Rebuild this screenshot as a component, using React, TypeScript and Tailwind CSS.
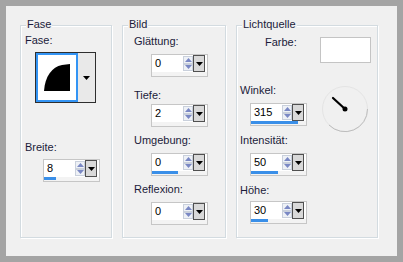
import React from "react";

const FONT = "font-['Liberation_Sans','Arial',sans-serif]";
const LABEL = "text-[11px] leading-[13px] text-[#1b1b3a] whitespace-nowrap";

function Tri({ up, color }: { up?: boolean; color: string }) {
  return (
    <svg width="7" height="4" viewBox="0 0 7 4">
      <path d={up ? "M0 4 L3.5 0 L7 4 Z" : "M0 0 L7 0 L3.5 4 Z"} fill={color} />
    </svg>
  );
}

function SpinBox({ value, bar = 0 }: { value: string; bar?: number }) {
  return (
    <div className="w-[57px] h-[23px] border border-[#c6c6c6] bg-white flex flex-col">
      <div className="flex h-[17px]">
        <span className="w-[31px] pl-[3px] text-[11px] leading-[17px] text-black">{value}</span>
        <div className="w-[10px] flex flex-col py-[1px]">
          <div className="flex-1 flex items-center justify-center border border-[#c9d0dc] bg-[#eef1f6]">
            <Tri up color="#7a88c4" />
          </div>
          <div className="flex-1 flex items-center justify-center border border-[#c9d0dc] bg-[#eef1f6]">
            <Tri color="#7a88c4" />
          </div>
        </div>
        <div className="w-[12px] h-[17px] border border-[#505050] bg-[#d9d9d9] flex items-center justify-center">
          <Tri color="#000" />
        </div>
      </div>
      <div className="h-[4px] bg-[#f3f3f3] flex items-start">
        <div className="h-[3px] bg-[#3a8fe8]" style={{ width: bar }} />
      </div>
    </div>
  );
}

function Group({
  title,
  width,
  children,
}: {
  title: string;
  width: number;
  children: React.ReactNode;
}) {
  return (
    <div
      className="relative h-[213px] border border-[#d3dbe0] shadow-[inset_1px_1px_0_#ffffff,1px_1px_0_#ffffff]"
      style={{ width }}
    >
      <span className={`absolute left-[5px] top-[-8px] px-[1px] bg-[#f0f0f0] ${LABEL}`}>
        {title}
      </span>
      {children}
    </div>
  );
}

function Field({
  label,
  labelX,
  spinX,
  top,
  gap = 6,
  value,
  bar,
}: {
  label: string;
  labelX: number;
  spinX: number;
  top: number;
  gap?: number;
  value: string;
  bar?: number;
}) {
  return (
    <div className="flex flex-col items-start" style={{ marginTop: top }}>
      <span className={LABEL} style={{ marginLeft: labelX }}>
        {label}
      </span>
      <div style={{ marginLeft: spinX, marginTop: gap }}>
        <SpinBox value={value} bar={bar} />
      </div>
    </div>
  );
}

function Dial() {
  return (
    <svg width="48" height="48" viewBox="0 0 48 48">
      <circle cx="24" cy="24" r="22.5" fill="#f0f0f0" stroke="#e4e4e4" strokeWidth="1" />
      <path d="M8 40 A22.5 22.5 0 0 0 46.5 24" fill="none" stroke="#bdbdbd" strokeWidth="1" />
      <line x1="12" y1="13" x2="24" y2="24" stroke="#000" strokeWidth="2.2" strokeLinecap="round" />
      <circle cx="24" cy="24" r="2.5" fill="#000" />
    </svg>
  );
}

export default function App() {
  return (
    <div
      className={`w-[403px] h-[262px] border-[6px] border-[#a4a4a4] bg-[#f0f0f0] flex gap-[10px] pl-[14px] pt-[19px] ${FONT}`}
    >
      <Group title="Fase" width={92}>
        <div className="flex flex-col items-start pl-[4px] pt-[8px]">
          <span className={LABEL}>Fase:</span>
          <div className="mt-[5px] ml-[10px] w-[61px] h-[51px] border border-[#2e2e2e] flex bg-[#e9e9e9]">
            <div className="w-[42px] h-full border-2 border-[#3394f4] bg-white flex items-center justify-center">
              <svg width="26" height="27" viewBox="0 0 26 27">
                <path d="M0 27 C1 12 8 3 18 1 L26 0 L26 27 Z" fill="#000" />
              </svg>
            </div>
            <div className="flex-1 flex items-center justify-center">
              <Tri color="#000" />
            </div>
          </div>
          <span className={`mt-[38px] ${LABEL}`}>Breite:</span>
          <div className="mt-[5px] ml-[18px]">
            <SpinBox value="8" bar={12} />
          </div>
        </div>
      </Group>

      <Group title="Bild" width={104}>
        <Field label="Glättung:" labelX={11} spinX={28} top={9} value="0" />
        <Field label="Tiefe:" labelX={11} spinX={28} top={12} gap={2} value="2" />
        <Field label="Umgebung:" labelX={11} spinX={28} top={7} value="0" bar={26} />
        <Field label="Reflexion:" labelX={11} spinX={28} top={7} value="0" />
      </Group>

      <Group title="Lichtquelle" width={142}>
        <div className="flex items-start pl-[28px] mt-[10px]">
          <span className={`w-[55px] ${LABEL}`}>Farbe:</span>
          <div className="w-[51px] h-[26px] mt-[1px] border border-[#c4c4c4] bg-white" />
        </div>
        <div className="flex items-start mt-[21px]">
          <div className="w-[84px]">
            <Field label="Winkel:" labelX={3} spinX={13} top={0} value="315" bar={47} />
          </div>
          <div className="mt-[1px]">
            <Dial />
          </div>
        </div>
        <Field label="Intensität:" labelX={3} spinX={13} top={1} value="50" bar={27} />
        <Field label="Höhe:" labelX={3} spinX={13} top={8} gap={4} value="30" bar={17} />
      </Group>
    </div>
  );
}
